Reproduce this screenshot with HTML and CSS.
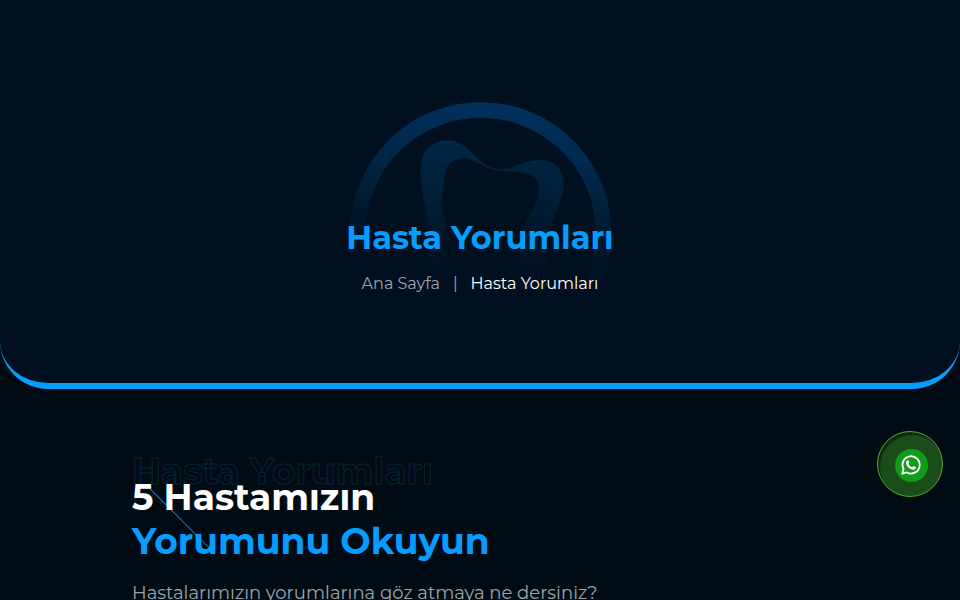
FILE: index.html
```
<!DOCTYPE html>
<html lang="tr">
<head>
  <meta charset="UTF-8">
  <meta name="viewport" content="width=device-width, initial-scale=1.0">
  <title>Hasta Yorumları</title>
  <link rel="stylesheet" href="styles.css">
</head>
<body>
  <header class="banner">
    <svg class="banner-logo" viewBox="0 0 900 750" aria-hidden="true">
      <defs>
        <linearGradient id="ring" gradientUnits="userSpaceOnUse" x1="520" y1="60" x2="440" y2="690">
          <stop offset="0" stop-color="#003260"/>
          <stop offset="0.35" stop-color="#002545"/>
          <stop offset="0.65" stop-color="#001629"/>
          <stop offset="1" stop-color="#00101f" stop-opacity="0"/>
        </linearGradient>
        <linearGradient id="tooth" gradientUnits="userSpaceOnUse" x1="480" y1="180" x2="480" y2="620">
          <stop offset="0" stop-color="#002747"/>
          <stop offset="0.5" stop-color="#001b33"/>
          <stop offset="0.75" stop-color="#001427"/>
          <stop offset="1" stop-color="#00101f" stop-opacity="0"/>
        </linearGradient>
      </defs>
      <circle cx="452" cy="459" r="369" fill="none" stroke="url(#ring)" stroke-width="47"/>
      <path fill="url(#tooth)" d="M290 640C305 540 302 450 288 390C276 345 272 310 272 275C270 215 305 181 352 181C425 184 430 255 505 268C560 266 575 240 635 240C690 243 710 290 697 345C686 395 655 430 650 500L655 640H565C560 550 565 465 595 415C620 375 630 340 625 310C617 275 575 276 505 273C455 262 430 235 402 235C355 238 342 265 341 310C334 355 337 385 345 420C350 500 350 570 345 640Z"/>
    </svg>
    <h1 class="banner-title">Hasta Yorumları</h1>
    <nav class="breadcrumb">
      <a href="#">Ana Sayfa</a>
      <span class="divider">|</span>
      <span class="current">Hasta Yorumları</span>
    </nav>
  </header>

  <main class="container">
    <div class="heading">
      <span class="heading-back">Hasta Yorumları</span>
      <h2 class="heading-title">5 Hastamızın<br><span>Yorumunu Okuyun</span></h2>
    </div>
    <p class="lead">Hastalarımızın yorumlarına göz atmaya ne dersiniz?</p>
  </main>

  <a class="whatsapp" href="#" aria-label="WhatsApp">
    <span class="whatsapp-icon">
      <svg viewBox="0 0 24 24" aria-hidden="true">
        <path d="M2.5 21.5l1.4-5A9.4 9.4 0 1 1 7.5 20.1z" fill="none" stroke="#fff" stroke-width="2" stroke-linejoin="round"/>
        <path fill="#fff" d="M8.3 6.8c.5-.1.8 0 1 .5l.8 1.9c.2.5-.5 1.200-.8 1.600 1 1.900 2.200 2.900 4.100 3.700.6-.5 1.100-1.600 1.600-1.300l2 1c.6.3.3 1.300-.1 1.900-.8 1-2.300 1.300-3.700.8-3.300-1.100-5.300-3.100-6.500-5.800-.7-1.700.2-3.700 1.600-4.300z"/>
      </svg>
    </span>
  </a>
</body>
</html>
```
FILE: styles.css
```
* {
  box-sizing: border-box;
}
html {
  overflow: hidden;
}
body {
  margin: 0;
  background-color: #000b14;
  color: #fff;
  font-family: Montserrat, Inter, "Noto Sans", sans-serif;
}
a {
  color: inherit;
  text-decoration: none;
}

/* banner */
.banner {
  position: relative;
  padding: 216px 16px 89px;
  text-align: center;
  background-color: #00101f;
  border-bottom: 6px solid #069dff;
  border-radius: 0 0 48px 48px;
}
.banner-logo {
  position: absolute;
  top: 80px;
  left: 50%;
  width: 300px;
  height: 250px;
  margin-left: -150px;
}
.banner-title {
  position: relative;
  margin: 0 0 14px;
  font-size: 32px;
  line-height: 44px;
  font-weight: 700;
  color: #069dff;
}
.breadcrumb {
  position: relative;
  display: flex;
  justify-content: center;
  gap: 13px;
  font-size: 16px;
  line-height: 20px;
  font-weight: 400;
  color: #9aa6ae;
}
.breadcrumb .current {
  color: #fff;
}

/* section heading */
.container {
  max-width: 728px;
  margin: 0 auto;
  padding: 60px 16px;
}
.heading {
  position: relative;
  padding-top: 26px;
}
.heading::before {
  content: "";
  position: absolute;
  top: 39px;
  left: 18px;
  width: 84px;
  height: 1px;
  background-color: #0a80d4;
  transform: rotate(45deg);
  transform-origin: 0 0;
}
.heading-back {
  position: absolute;
  top: 0;
  left: 0;
  font-size: 36px;
  line-height: 44px;
  font-weight: 700;
  white-space: nowrap;
  color: #000b14;
  -webkit-text-stroke: 1px #062338;
}
.heading-title {
  position: relative;
  margin: 0;
  font-size: 36px;
  line-height: 44px;
  font-weight: 700;
}
.heading-title span {
  color: #069dff;
}
.lead {
  margin: 16px 0 0;
  font-size: 18px;
  line-height: 28px;
  color: #9aa6ae;
}

/* whatsapp button */
.whatsapp {
  position: fixed;
  right: 17px;
  bottom: 103px;
  display: flex;
  align-items: center;
  justify-content: center;
  width: 66px;
  height: 66px;
  padding: 2px 0 0 2px;
  border: 1px solid #55a52c;
  border-radius: 50%;
  background-color: #1b4d1b;
  box-shadow: inset 2px 3px 1px #0b2b12;
}
.whatsapp-icon {
  display: flex;
  align-items: center;
  justify-content: center;
  width: 33px;
  height: 33px;
  border-radius: 50%;
  background-color: #0f9d18;
}
.whatsapp-icon svg {
  width: 22px;
  height: 22px;
}
```
